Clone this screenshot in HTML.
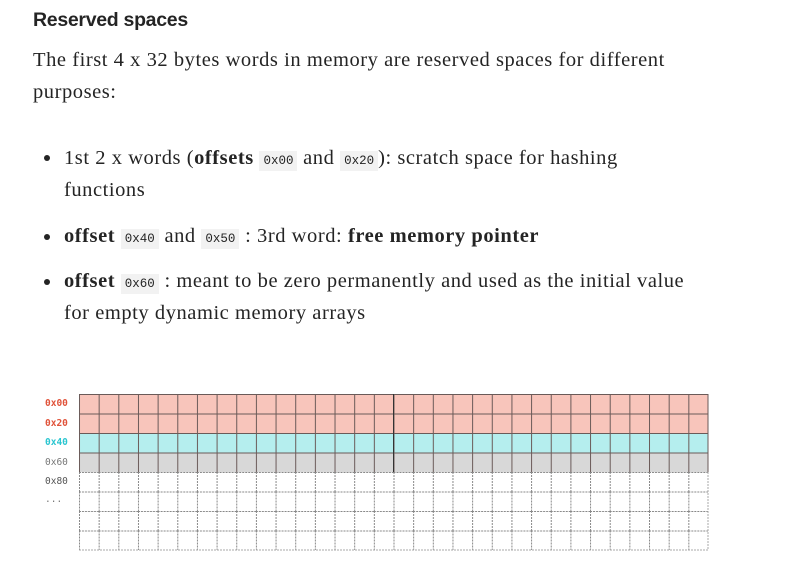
<!DOCTYPE html>
<html><head><meta charset="utf-8"><style>
body{margin:0;background:#fff;width:787px;height:573px;overflow:hidden;position:relative;color:#242424}
.h{position:absolute;left:33px;top:9px;font:bold 19.5px "Liberation Sans",sans-serif;letter-spacing:-0.3px}
.p{position:absolute;font:20.5px/32px "Liberation Serif",serif;margin:0;letter-spacing:0.55px;white-space:nowrap}
code{font:12.5px "Liberation Mono",monospace;background:#f2f2f2;padding:3px 4px;color:#242424;letter-spacing:0}
.dot{position:absolute;left:44px;width:6px;height:6px;border-radius:50%;background:#242424}
.lab{position:absolute;left:45px;font:bold 9.5px "DejaVu Sans Mono","Liberation Mono",monospace}
</style></head><body>
<div class="h">Reserved spaces</div>
<p class="p" style="left:33px;top:44px">The first 4 x 32 bytes words in memory are reserved spaces for different<br>purposes:</p>
<div class="dot" style="top:155px"></div>
<p class="p" style="left:64px;top:142px">1st 2 x words (<b>offsets</b> <code>0x00</code> and <code>0x20</code>): scratch space for hashing<br>functions</p>
<div class="dot" style="top:234px"></div>
<p class="p" style="left:64px;top:220px"><b>offset</b> <code>0x40</code> and <code>0x50</code> : 3rd word: <b>free memory pointer</b></p>
<div class="dot" style="top:279px"></div>
<p class="p" style="left:64px;top:265px"><b>offset</b> <code>0x60</code> : meant to be zero permanently and used as the initial value<br>for empty dynamic memory arrays</p>
<div class="lab" style="top:398px;color:#e0533a">0x00</div>
<div class="lab" style="top:418px;color:#e0533a">0x20</div>
<div class="lab" style="top:437px;color:#2cc6d0">0x40</div>
<div class="lab" style="top:457px;color:#777;font-weight:normal">0x60</div>
<div class="lab" style="top:476px;color:#555;font-weight:normal">0x80</div>
<div class="lab" style="top:494px;color:#777;font-weight:normal">...</div>
<svg style="position:absolute;left:0;top:0" width="787" height="573">
<defs>
<pattern id="s" patternUnits="userSpaceOnUse" x="79" y="394" width="19.656" height="19.5"><path d="M0.5 0V19.5M0 0.5H19.656" stroke="#6a5a58" stroke-width="1"/></pattern>
<pattern id="d" patternUnits="userSpaceOnUse" x="79" y="394" width="19.656" height="19.5"><path d="M0.5 0V19.5M0 0.5H19.656" stroke="#888" stroke-width="1" stroke-dasharray="2 1"/></pattern>
</defs>
<rect x="79" y="394" width="629" height="39" fill="#f8c5bb"/>
<rect x="79" y="433" width="629" height="19.5" fill="#b5eeee"/>
<rect x="79" y="452.5" width="629" height="19.5" fill="#d8d8d8"/>
<rect x="79" y="394" width="629" height="78" fill="url(#s)"/>
<rect x="79" y="472" width="629" height="78" fill="url(#d)"/>
<line x1="708" y1="394" x2="708" y2="472" stroke="#6a5a58"/>
<line x1="708" y1="472" x2="708" y2="550" stroke="#aaa" stroke-dasharray="2 1"/>
<line x1="79" y1="550" x2="708" y2="550" stroke="#aaa" stroke-dasharray="2 1"/>
<line x1="393.5" y1="394" x2="393.5" y2="472" stroke="#333"/>
</svg>
</body></html>
